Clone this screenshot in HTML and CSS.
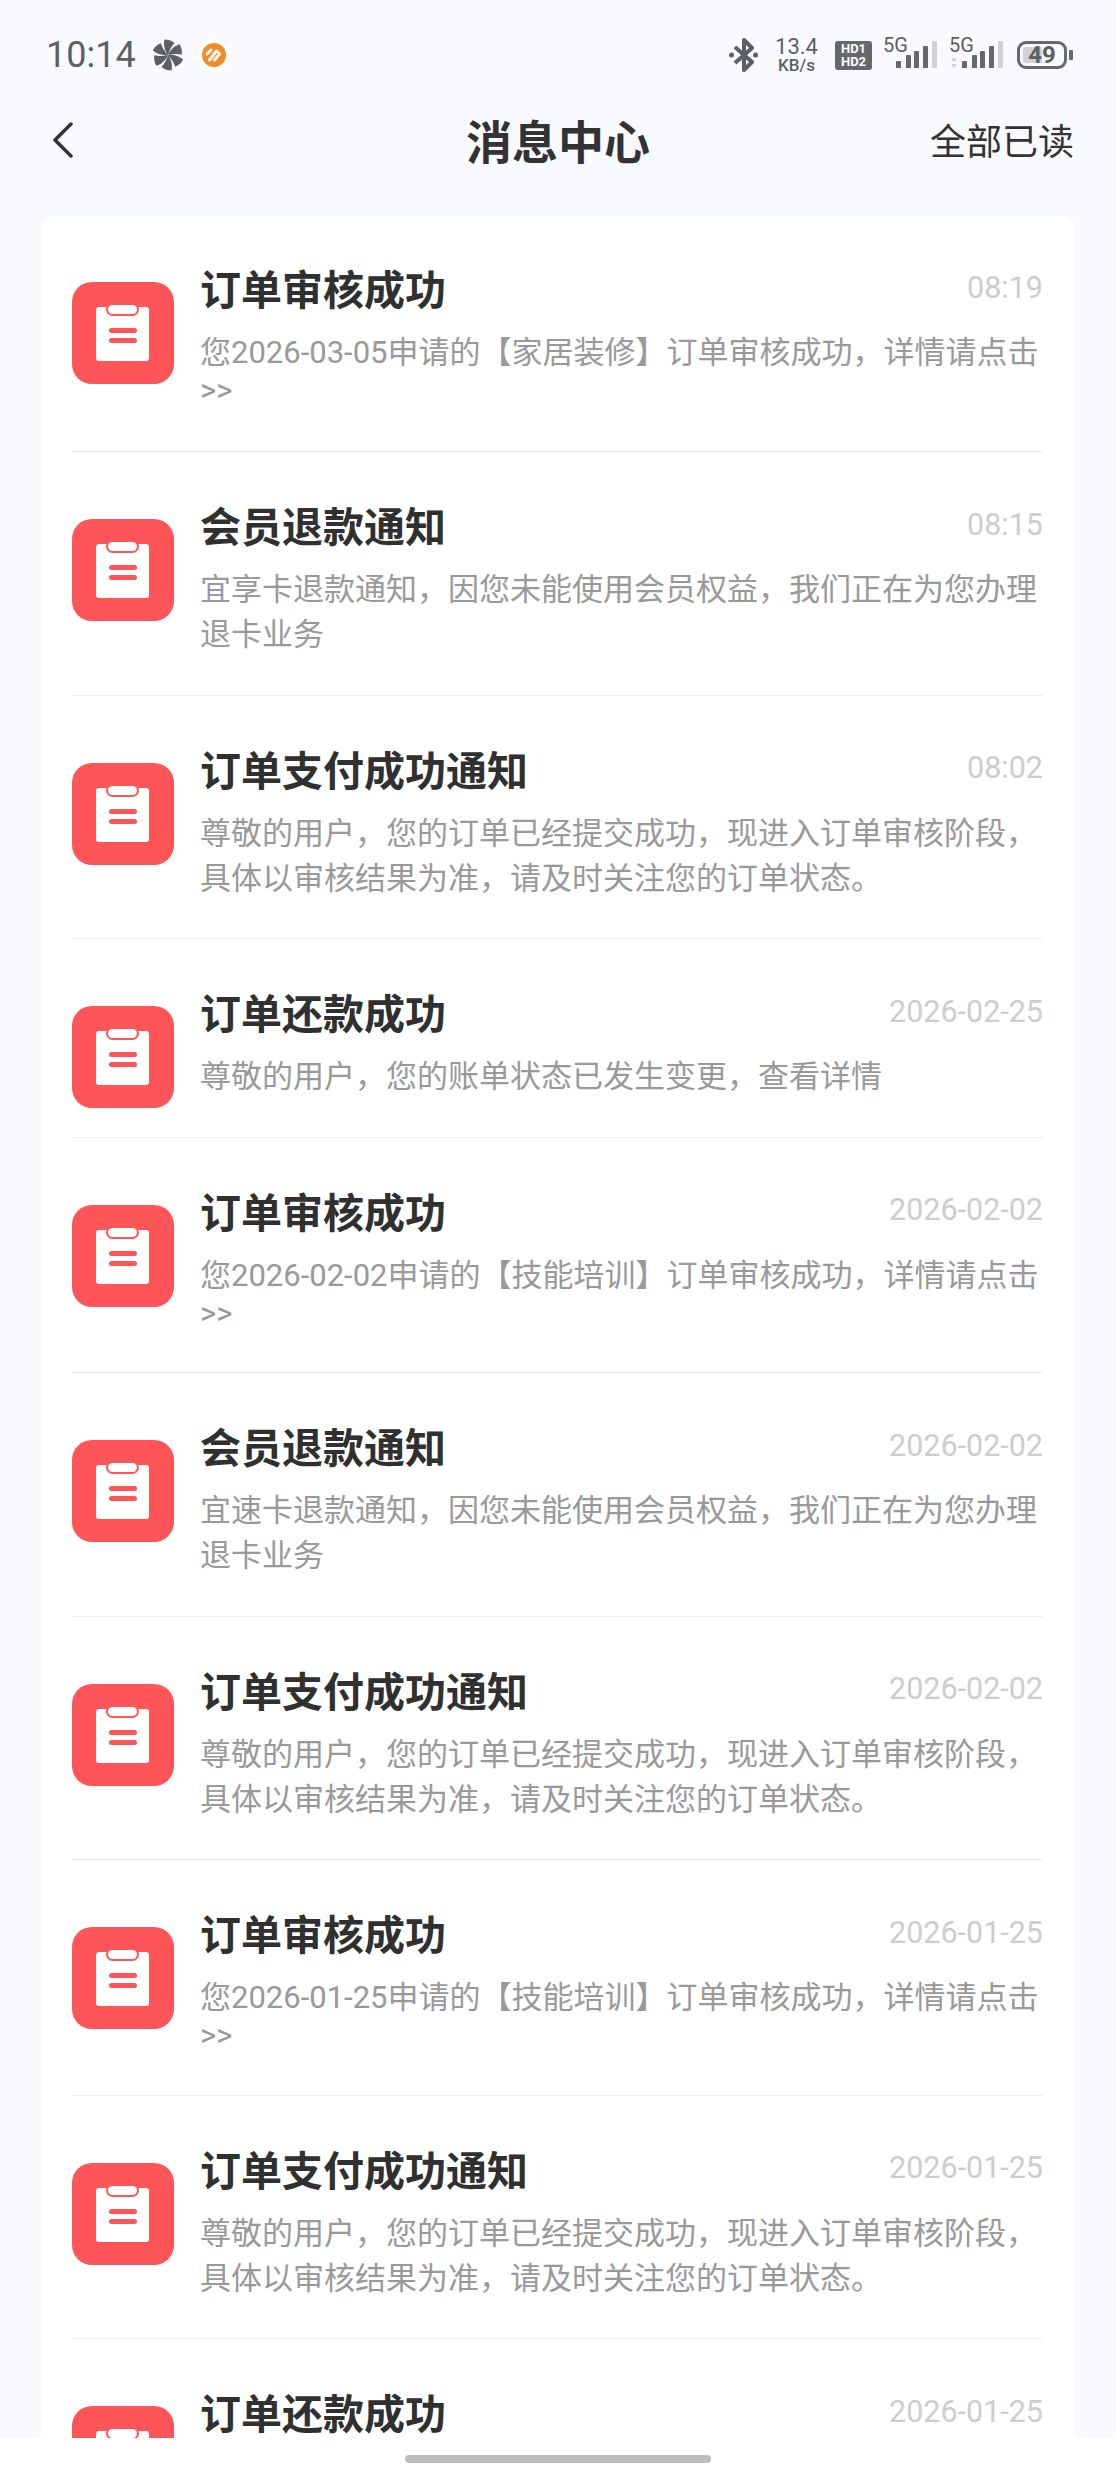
FILE: index.html
```html
<!DOCTYPE html>
<html lang="zh-CN">
<head>
    <meta charset="UTF-8">
    <meta name="viewport" content="width=device-width, initial-scale=1.0">
    <title>消息中心</title>
    <link rel="stylesheet" href="styles.css">
</head>
<body>
    <svg class="defs" width="0" height="0">
        <symbol id="notice" viewBox="0 0 102 102">
            <rect width="102" height="102" rx="20" fill="#fe5658"/>
            <rect x="24" y="25" width="53" height="54" rx="3" fill="#fff"/>
            <rect x="34" y="21" width="33" height="13" rx="6.5" fill="#fe5658"/>
            <rect x="36" y="23" width="29" height="9" rx="4.5" fill="#fff"/>
            <rect x="37" y="46" width="28" height="5" rx="2.5" fill="#fe5658"/>
            <rect x="37" y="56" width="28" height="5" rx="2.5" fill="#fe5658"/>
        </symbol>
        <symbol id="bars" viewBox="0 0 54 30">
            <path d="M13 22a1 1 0 0 1 1-1h3a1 1 0 0 1 1 1v6h-5zM23 16a1 1 0 0 1 1-1h3a1 1 0 0 1 1 1v12h-5zM31 12a1 1 0 0 1 1-1h3a1 1 0 0 1 1 1v16h-5zM40 7a1 1 0 0 1 1-1h3a1 1 0 0 1 1 1v21h-5z" fill="#66686c"/>
            <rect x="49" y="1" width="5" height="27" rx="1" fill="#cfd1d4"/>
        </symbol>
        <symbol id="blade" viewBox="0 0 32 32">
            <path d="M16 16C13 12 11 6 12.500 .5C16 .5 20 1.500 22.500 4C20 6.500 17.500 11 16 16z" fill="#5c5f63"/>
        </symbol>
    </svg>

    <div class="status">
        <div class="status-left">
            <span class="clock">10:14</span>
            <svg class="fan" viewBox="0 0 32 32">
                <use href="#blade"/>
                <use href="#blade" transform="rotate(60 16 16)"/>
                <use href="#blade" transform="rotate(120 16 16)"/>
                <use href="#blade" transform="rotate(180 16 16)"/>
                <use href="#blade" transform="rotate(240 16 16)"/>
                <use href="#blade" transform="rotate(300 16 16)"/>
            </svg>
            <svg class="app-badge" viewBox="0 0 32 32">
                <circle cx="16" cy="16" r="16" fill="#fff"/>
                <circle cx="16" cy="16" r="12" fill="#f68a23"/>
                <path d="M9 15l4-4M11.500 21l7-9 3 3-5 6" stroke="#fff" stroke-width="3" stroke-linecap="round" stroke-linejoin="round" fill="none"/>
            </svg>
        </div>
        <div class="status-right">
            <svg class="bluetooth" viewBox="0 0 29 34">
                <path d="M6 9l17 15-8 8V2l8 8L6 25" stroke="#5c5f63" stroke-width="4" stroke-linejoin="round" fill="none"/>
                <circle cx="2.500" cy="17" r="2.500" fill="#5c5f63"/>
                <circle cx="26.500" cy="17" r="2.500" fill="#5c5f63"/>
            </svg>
            <div class="speed"><span class="speed-num">13.4</span><span class="speed-unit">KB/s</span></div>
            <div class="hd"><span>HD1</span><span>HD2</span></div>
            <div class="signal">
                <span class="net">5G</span>
                <svg class="bars" viewBox="0 0 54 30"><use href="#bars"/></svg>
            </div>
            <div class="signal">
                <span class="net">5G</span>
                <svg class="bars" viewBox="0 0 54 30"><use href="#bars"/><path d="M5 17l3 4H2zM5 28l-3-4h6z" fill="#cfd1d4"/></svg>
            </div>
            <div class="battery-wrap">
                <div class="battery">49</div>
                <span class="battery-nub"></span>
            </div>
        </div>
    </div>

    <div class="nav">
        <div class="nav-left">
            <svg class="back" viewBox="0 0 22 36"><path d="M19 2L3 18l16 16" stroke="#333" stroke-width="3.5" stroke-linecap="round" stroke-linejoin="round" fill="none"/></svg>
        </div>
        <div class="nav-title">消息中心</div>
        <div class="nav-action">全部已读</div>
    </div>

    <div class="list">
        <div class="row">
            <svg class="row-icon"><use href="#notice"/></svg>
            <div class="row-body">
                <div class="row-head"><span class="row-title">订单审核成功</span><span class="row-time">08:19</span></div>
                <div class="row-desc">您2026-03-05申请的【家居装修】订单审核成功，详情请点击&gt;&gt;</div>
            </div>
        </div>
        <div class="row">
            <svg class="row-icon"><use href="#notice"/></svg>
            <div class="row-body">
                <div class="row-head"><span class="row-title">会员退款通知</span><span class="row-time">08:15</span></div>
                <div class="row-desc">宜享卡退款通知，因您未能使用会员权益，我们正在为您办理退卡业务</div>
            </div>
        </div>
        <div class="row">
            <svg class="row-icon"><use href="#notice"/></svg>
            <div class="row-body">
                <div class="row-head"><span class="row-title">订单支付成功通知</span><span class="row-time">08:02</span></div>
                <div class="row-desc">尊敬的用户，您的订单已经提交成功，现进入订单审核阶段，具体以审核结果为准，请及时关注您的订单状态。</div>
            </div>
        </div>
        <div class="row">
            <svg class="row-icon"><use href="#notice"/></svg>
            <div class="row-body">
                <div class="row-head"><span class="row-title">订单还款成功</span><span class="row-time">2026-02-25</span></div>
                <div class="row-desc">尊敬的用户，您的账单状态已发生变更，查看详情</div>
            </div>
        </div>
        <div class="row">
            <svg class="row-icon"><use href="#notice"/></svg>
            <div class="row-body">
                <div class="row-head"><span class="row-title">订单审核成功</span><span class="row-time">2026-02-02</span></div>
                <div class="row-desc">您2026-02-02申请的【技能培训】订单审核成功，详情请点击&gt;&gt;</div>
            </div>
        </div>
        <div class="row">
            <svg class="row-icon"><use href="#notice"/></svg>
            <div class="row-body">
                <div class="row-head"><span class="row-title">会员退款通知</span><span class="row-time">2026-02-02</span></div>
                <div class="row-desc">宜速卡退款通知，因您未能使用会员权益，我们正在为您办理退卡业务</div>
            </div>
        </div>
        <div class="row">
            <svg class="row-icon"><use href="#notice"/></svg>
            <div class="row-body">
                <div class="row-head"><span class="row-title">订单支付成功通知</span><span class="row-time">2026-02-02</span></div>
                <div class="row-desc">尊敬的用户，您的订单已经提交成功，现进入订单审核阶段，具体以审核结果为准，请及时关注您的订单状态。</div>
            </div>
        </div>
        <div class="row">
            <svg class="row-icon"><use href="#notice"/></svg>
            <div class="row-body">
                <div class="row-head"><span class="row-title">订单审核成功</span><span class="row-time">2026-01-25</span></div>
                <div class="row-desc">您2026-01-25申请的【技能培训】订单审核成功，详情请点击&gt;&gt;</div>
            </div>
        </div>
        <div class="row">
            <svg class="row-icon"><use href="#notice"/></svg>
            <div class="row-body">
                <div class="row-head"><span class="row-title">订单支付成功通知</span><span class="row-time">2026-01-25</span></div>
                <div class="row-desc">尊敬的用户，您的订单已经提交成功，现进入订单审核阶段，具体以审核结果为准，请及时关注您的订单状态。</div>
            </div>
        </div>
        <div class="row">
            <svg class="row-icon"><use href="#notice"/></svg>
            <div class="row-body">
                <div class="row-head"><span class="row-title">订单还款成功</span><span class="row-time">2026-01-25</span></div>
                <div class="row-desc">尊敬的用户，您的账单状态已发生变更，查看详情</div>
            </div>
        </div>
    </div>

    <div class="home-bar"><span class="home-pill"></span></div>
</body>
</html>
```

FILE: styles.css
```css
html, body {
    margin: 0;
    height: 100%;
}
body {
    width: 1116px;
    height: 2480px;
    overflow: hidden;
    display: flex;
    flex-direction: column;
    background-color: #f9fafe;
    font-family: Roboto, "Noto Sans CJK SC", sans-serif;
    color: #333;
}
.defs {
    position: absolute;
}

/* status bar */
.status {
    height: 104px;
    flex: none;
    box-sizing: border-box;
    display: flex;
    justify-content: space-between;
    align-items: center;
    padding: 6px 43px 0 46px;
    color: #5c5f63;
}
.status-left {
    display: flex;
    align-items: center;
}
.clock {
    font-size: 36px;
    width: 106px;
}
.fan {
    width: 32px;
    height: 32px;
    margin-right: 14px;
}
.app-badge {
    width: 32px;
    height: 32px;
}
.status-right {
    display: flex;
    align-items: center;
}
.bluetooth {
    width: 29px;
    height: 34px;
    margin-right: 18px;
}
.speed {
    width: 41px;
    margin-right: 18px;
    display: flex;
    flex-direction: column;
    align-items: center;
    line-height: 1;
}
.speed-num {
    font-size: 22px;
}
.speed-unit {
    font-size: 17px;
    font-weight: 500;
    margin-top: -1px;
    white-space: nowrap;
}
.hd {
    width: 37px;
    height: 29px;
    margin-right: 11px;
    border-radius: 3px;
    background-color: #66686c;
    color: #fff;
    font-size: 13px;
    font-weight: 700;
    line-height: 13px;
    display: flex;
    flex-direction: column;
    align-items: center;
    justify-content: center;
}
.signal {
    position: relative;
    width: 54px;
    height: 30px;
    margin-right: 12px;
}
.net {
    position: absolute;
    left: 0;
    top: -5px;
    font-size: 20px;
    line-height: 20px;
}
.bars {
    display: block;
    width: 54px;
    height: 30px;
}
.battery-wrap {
    display: flex;
    align-items: center;
    margin-left: 2px;
}
.battery {
    width: 38px;
    height: 16px;
    border: 3px solid #66686c;
    border-radius: 9px;
    padding: 3px;
    background: linear-gradient(to right, #cfd1d4 50%, transparent 50%) content-box;
    font-size: 24px;
    font-weight: 700;
    line-height: 16px;
    text-align: center;
}
.battery-nub {
    width: 4px;
    height: 10px;
    margin-left: 2px;
    border-radius: 1px;
    background-color: #66686c;
}

/* title bar */
.nav {
    height: 64px;
    flex: none;
    display: grid;
    grid-template-columns: 1fr auto 1fr;
    align-items: center;
    padding: 2px 42px 0;
}
.back {
    display: block;
    width: 22px;
    height: 36px;
    margin: 1px 0 0 10px;
}
.nav-title {
    font-size: 46px;
    font-weight: 700;
}
.nav-action {
    font-size: 36px;
    text-align: right;
}

/* message list */
.list {
    flex: 1;
    min-height: 0;
    overflow: hidden;
    margin: 46px 41px 0 41px;
    padding: 0 32px 0 31px;
    background-color: #fff;
    border-radius: 14px 14px 0 0;
}
.row {
    display: flex;
    align-items: flex-start;
    gap: 26px;
    padding: 42px 0 40.5px;
    border-bottom: 1px solid #eee;
}
.row:first-child {
    padding-top: 41px;
    padding-bottom: 42px;
}
.row-icon {
    width: 102px;
    height: 102px;
    flex: none;
    margin: 25px 0 -30px;
}
.row-body {
    flex: 1;
    min-width: 0;
}
.row-head {
    display: flex;
    justify-content: space-between;
    align-items: center;
    margin-bottom: 10px;
}
.row-title {
    font-size: 41px;
    font-weight: 700;
    color: #303030;
}
.row-time {
    font-size: 30.5px;
    color: #cdcdcd;
}
.row-desc {
    font-size: 31px;
    color: #999;
}

/* gesture bar */
.home-bar {
    position: relative;
    height: 42px;
    flex: none;
    background-color: #fff;
    display: flex;
    justify-content: center;
    padding-top: 17px;
    box-sizing: border-box;
}
.home-pill {
    width: 306px;
    height: 8px;
    border-radius: 4px;
    background-color: #bdbdbd;
}
```
